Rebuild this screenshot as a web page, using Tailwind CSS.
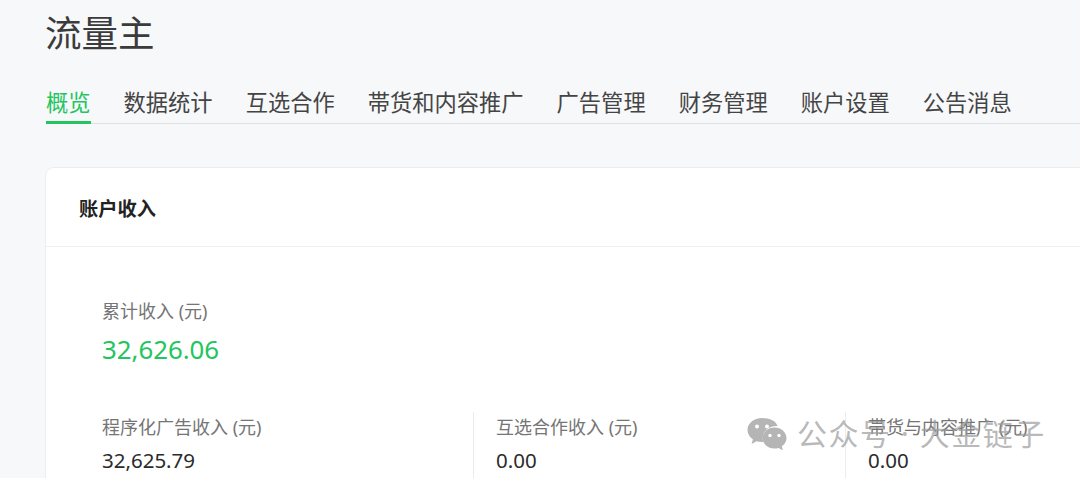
<!DOCTYPE html>
<html lang="zh">
<head>
<meta charset="utf-8">
<script src="https://cdn.jsdelivr.net/npm/@tailwindcss/browser@4"></script>
</head>
<body class="m-0 h-[478px] w-[1080px] overflow-hidden bg-[#f7f8fa] font-['Noto_Sans','Noto_Sans_CJK_SC',sans-serif]">
<div class="relative h-[478px] overflow-hidden pl-[46px]">
  <h1 class="h-[68px] pt-[8px] text-[36.5px] leading-[50px] font-normal text-[#3b3b3b] -ml-px">流量主</h1>
  <nav class="flex h-[56px] gap-[33px] border-b border-[#e0e1e4] text-[22.28px] leading-[36px] text-[#444] pt-[17px]">
    <a class="relative h-[39px] border-b-[3px] border-[#22c55e] text-[#22c55e]">概览</a>
    <a>数据统计</a>
    <a>互选合作</a>
    <a>帯货和内容推广</a>
    <a>广告管理</a>
    <a>财务管理</a>
    <a>账户设置</a>
    <a>公告消息</a>
  </nav>
  <section class="-ml-px mt-[43px] h-[400px] w-[1100px] rounded-l-[9px] border-t border-l border-[#eceded] bg-white">
    <h2 class="flex h-[79px] items-center border-b border-[#f0f0f0] pl-[33px] pt-[4px] text-[19.25px] font-bold text-[#222]">账户收入</h2>
    <div class="pl-[56px] pt-[51px]">
      <p class="text-[18px] leading-[26px] text-[#757575]">累计收入 (元)</p>
      <p class="mt-[6px] text-[25.8px] leading-[38px] text-[#22c55e]">32,626.06</p>
      <div class="mt-[44px] flex h-[80px]">
        <div class="w-[371px] pt-[2px]">
          <p class="text-[18px] leading-[26px] text-[#757575]">程序化广告收入 (元)</p>
          <p class="mt-[5px] text-[20.5px] leading-[30px] text-[#2b2b2b]">32,625.79</p>
        </div>
        <div class="w-[372px] border-l border-[#ececec] pl-[22px] pt-[2px]">
          <p class="text-[18px] leading-[26px] text-[#757575]">互选合作收入 (元)</p>
          <p class="mt-[5px] text-[20.5px] leading-[30px] text-[#2b2b2b]">0.00</p>
        </div>
        <div class="w-[300px] border-l border-[#ececec] pl-[22px] pt-[2px]">
          <p class="text-[18px] leading-[26px] text-[#757575]">帯货与内容推广 (元)</p>
          <p class="mt-[5px] text-[20.5px] leading-[30px] text-[#2b2b2b]">0.00</p>
        </div>
      </div>
    </div>
  </section>
  <div class="absolute left-[747px] top-[416px] flex items-center gap-[10px] text-[30px] leading-[36px] tracking-[1.5px] text-[#9a9a9a]/70">
    <svg width="40" height="34" viewBox="0 0 40 34" class="shrink-0">
      <path d="M15 1C7 1 .5 6.300.5 13c0 3.800 2.100 7 5.400 9.300L4.600 27l5-2.800c1.700.5 3.400.8 5.200.8.500 0 1 0 1.500-.1-.4-1.300-.6-2.500-.6-3.900 0-6.700 6.100-12 13.600-12h1.200C29.300 4 22.800 1 15 1z" fill="#b5b5b5"/>
      <circle cx="10" cy="9.500" r="2" fill="#fff"/><circle cx="20" cy="9.500" r="2" fill="#fff"/>
      <path d="M39.500 21c0-5.800-5.400-10.500-12-10.500S15.500 15.200 15.500 21s5.400 10.500 12 10.500c1.400 0 2.700-.2 4-.6l4.400 2.300-1.100-3.900c2.800-2 4.700-4.900 4.700-8.300z" fill="#b5b5b5"/>
      <circle cx="23" cy="18.500" r="1.700" fill="#fff"/><circle cx="32" cy="18.500" r="1.700" fill="#fff"/>
    </svg>
    <span>公众号 · 大金链子</span>
  </div>
</div>
</body>
</html>
